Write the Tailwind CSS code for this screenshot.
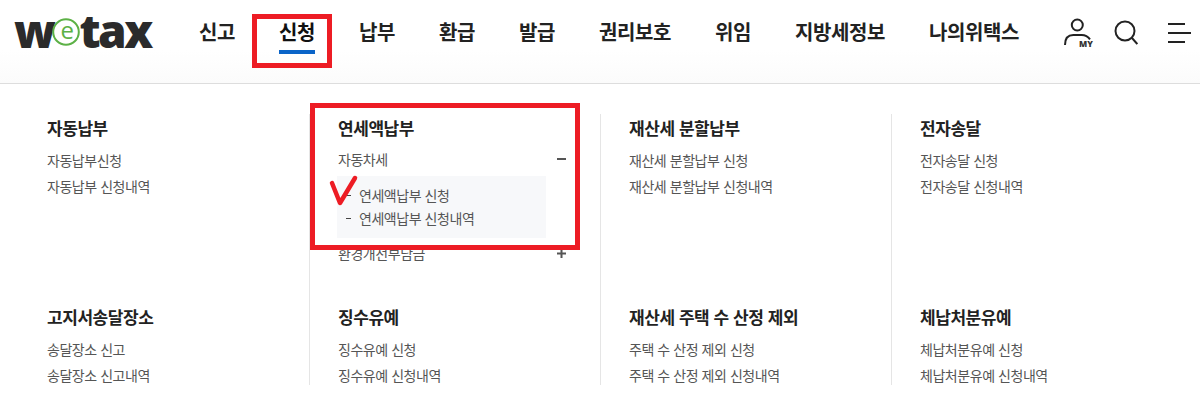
<!DOCTYPE html>
<html lang="ko">
<head>
  <meta charset="UTF-8" />
  <title>wetax</title>
  <script src="https://cdn.jsdelivr.net/npm/@tailwindcss/browser@4"></script>
</head>
<body class="bg-white h-[404px] w-[1200px] overflow-hidden relative font-['Noto_Sans_CJK_KR','Noto_Sans',sans-serif] text-[#222]">

  <!-- header -->
  <header class="h-[84px] border-b border-[#ddd] flex items-start bg-gradient-to-b from-white from-60% to-[#fbfbfb]">
    <div class="w-[199px] pl-[14px] shrink-0">
      <div class="flex items-center h-[60px] font-['Open_Sans',sans-serif] font-extrabold text-[46px] tracking-[-2.5px] text-[#2b2b2b] leading-[60px]">
        <span>w</span>
        <svg width="36" height="36" viewBox="-4 -4 36 36" class="mx-[-5px] mt-[3px] shrink-0">
          <circle cx="14" cy="14" r="12.800" fill="#fff" stroke="#5cb146" stroke-width="2"/>
          <text x="14" y="20.500" text-anchor="middle" font-size="24" font-weight="400" fill="#5cb146" font-family="Open Sans">e</text>
        </svg>
        <span>tax</span>
      </div>
    </div>
    <nav class="flex gap-[44px] pt-[19px] text-[20px] font-bold leading-[26px] tracking-[-0.4px]">
      <a>신고</a>
      <a class="relative text-[#111]">신청<span class="absolute left-0 right-0 top-[31px] h-[4px] bg-[#0a64c8]"></span></a>
      <a>납부</a>
      <a>환급</a>
      <a>발급</a>
      <a>권리보호</a>
      <a>위임</a>
      <a>지방세정보</a>
      <a>나의위택스</a>
    </nav>
    <div class="ml-auto flex items-start pt-[17px] pr-[9px]">
      <svg width="30" height="32" viewBox="0 0 30 32" fill="none" stroke="#222" stroke-width="2">
        <circle cx="13.300" cy="8" r="5.500"/>
        <path d="M1 28C1 21 4 18 9.300 18H17.700C21 18 24 19.500 26 22.300"/>
        <text x="15" y="30" font-size="8.500" font-weight="800" fill="#333" stroke="none" font-family="Open Sans">MY</text>
      </svg>
      <svg width="24" height="28" viewBox="0 0 24 28" fill="none" stroke="#222" stroke-width="2" class="ml-[20px] mt-[3px]">
        <circle cx="11" cy="11" r="9.500"/>
        <path d="M18 18l5.300 6"/>
      </svg>
      <svg width="23" height="28" viewBox="0 0 23 28" fill="none" stroke="#222" stroke-width="2" class="ml-[30px]">
        <path d="M0 7h17M0 16h23M0 25h17"/>
      </svg>
    </div>
  </header>

  <!-- sub menu -->
  <main class="mt-[30px] h-[271px] overflow-hidden grid grid-cols-[291px_291px_291px_291px] auto-rows-[189px] ml-[18px] text-[14px] tracking-[-0.45px] text-[#555]">
    <section class="pl-[29px] pt-[2px]">
      <h3 class="text-[17px] font-bold text-[#222] tracking-[-0.45px] leading-[24px] mb-[7px]">자동납부</h3>
      <p class="leading-[26px]">자동납부신청</p>
      <p class="leading-[26px]">자동납부 신청내역</p>
    </section>
    <section class="pl-[28px] pr-[34px] pt-[2px] border-l border-[#e5e5e5]">
      <h3 class="text-[17px] font-bold text-[#222] tracking-[-0.45px] leading-[24px] mb-[6px]">연세액납부</h3>
      <p class="leading-[26px] flex justify-between items-center">자동차세<span class="w-[9px] h-[2px] bg-[#555]"></span></p>
      <div class="bg-[#f7f8fa] w-[209px] h-[62px] mt-[4px] ml-[-1px] pl-[9px] pt-[8px] mb-[2px]">
        <p class="leading-[23px] flex items-center gap-[8px]"><span class="w-[5px] h-px bg-[#444]"></span>연세액납부 신청</p>
        <p class="leading-[23px] flex items-center gap-[8px]"><span class="w-[5px] h-px bg-[#444]"></span>연세액납부 신청내역</p>
      </div>
      <p class="leading-[26px] flex justify-between items-center">환경개선부담금
        <svg width="9" height="9" viewBox="0 0 9 9" fill="none" stroke="#555" stroke-width="2"><path d="M0 4.500h9M4.500 0v9"/></svg>
      </p>
    </section>
    <section class="pl-[28px] pt-[2px] border-l border-[#e5e5e5]">
      <h3 class="text-[17px] font-bold text-[#222] tracking-[-0.45px] leading-[24px] mb-[7px]">재산세 분할납부</h3>
      <p class="leading-[26px]">재산세 분할납부 신청</p>
      <p class="leading-[26px]">재산세 분할납부 신청내역</p>
    </section>
    <section class="pl-[28px] pt-[2px] border-l border-[#e5e5e5]">
      <h3 class="text-[17px] font-bold text-[#222] tracking-[-0.45px] leading-[24px] mb-[7px]">전자송달</h3>
      <p class="leading-[26px]">전자송달 신청</p>
      <p class="leading-[26px]">전자송달 신청내역</p>
    </section>

    <section class="pl-[29px] pt-[2px]">
      <h3 class="text-[17px] font-bold text-[#222] tracking-[-0.45px] leading-[24px] mb-[7px]">고지서송달장소</h3>
      <p class="leading-[26px]">송달장소 신고</p>
      <p class="leading-[27px]">송달장소 신고내역</p>
    </section>
    <section class="pl-[28px] pt-[2px] border-l border-[#e5e5e5]">
      <h3 class="text-[17px] font-bold text-[#222] tracking-[-0.45px] leading-[24px] mb-[7px]">징수유예</h3>
      <p class="leading-[26px]">징수유예 신청</p>
      <p class="leading-[27px]">징수유예 신청내역</p>
    </section>
    <section class="pl-[28px] pt-[2px] border-l border-[#e5e5e5]">
      <h3 class="text-[17px] font-bold text-[#222] tracking-[-0.45px] leading-[24px] mb-[7px]">재산세 주택 수 산정 제외</h3>
      <p class="leading-[26px]">주택 수 산정 제외 신청</p>
      <p class="leading-[27px]">주택 수 산정 제외 신청내역</p>
    </section>
    <section class="pl-[28px] pt-[2px] border-l border-[#e5e5e5]">
      <h3 class="text-[17px] font-bold text-[#222] tracking-[-0.45px] leading-[24px] mb-[7px]">체납처분유예</h3>
      <p class="leading-[26px]">체납처분유예 신청</p>
      <p class="leading-[27px]">체납처분유예 신청내역</p>
    </section>
  </main>

  <!-- red annotations -->
  <div class="absolute left-[252px] top-[14px] w-[80px] h-[54px] border-[5px] border-[#ed1c24]"></div>
  <div class="absolute left-[310px] top-[103px] w-[270px] h-[147px] border-[5px] border-[#ed1c24]"></div>
  <svg class="absolute left-[328px] top-[172px]" width="34" height="38" viewBox="0 0 34 38" fill="none" stroke="#ed1c24" stroke-width="4.500" stroke-linecap="round" stroke-linejoin="round">
    <path d="M4 11L12 31L27 6"/>
  </svg>
</body>
</html>
